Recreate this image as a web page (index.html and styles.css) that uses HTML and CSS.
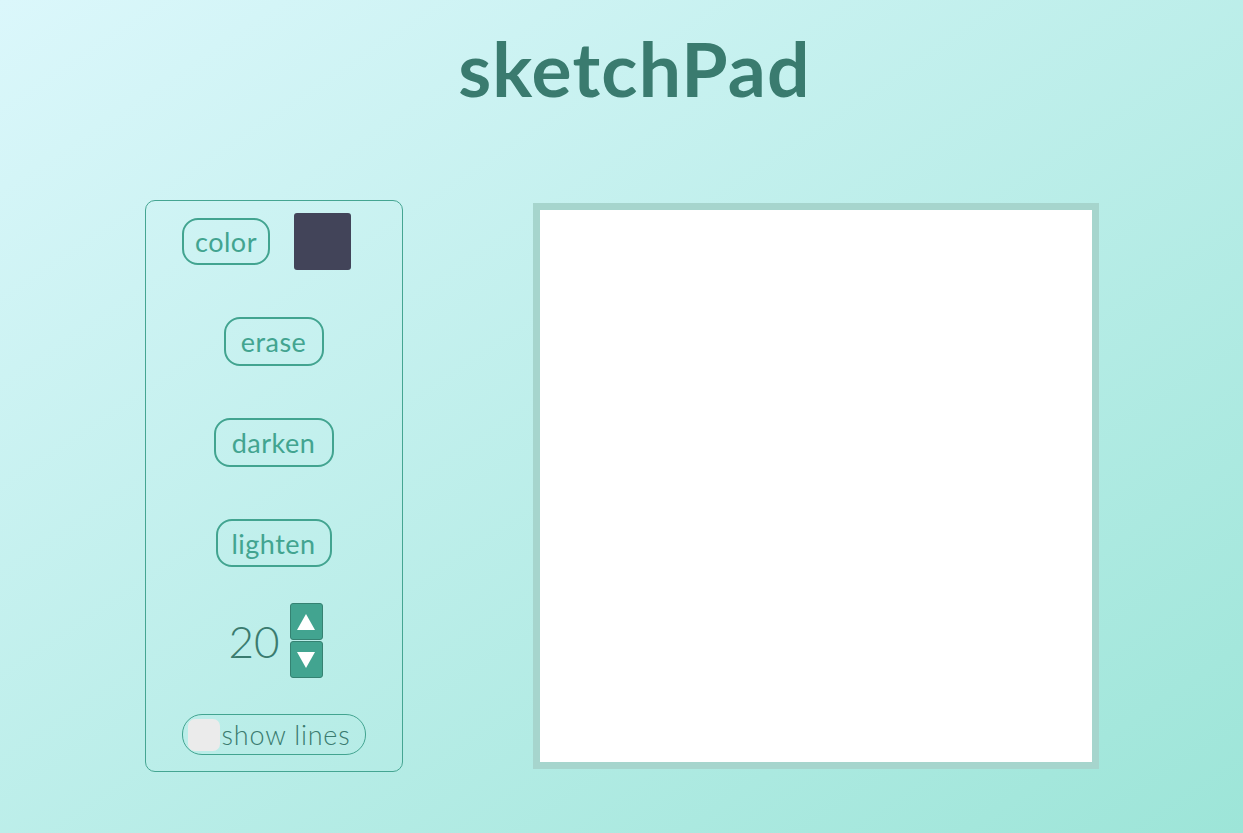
FILE: index.html
```html
<!DOCTYPE html>
<html lang="en">
<head>
<meta charset="utf-8">
<title>sketchPad</title>
<link rel="stylesheet" href="styles.css">
</head>
<body>
<h1 class="title">sketchPad</h1>
<main class="workspace">
  <section class="panel">
    <div class="row color-row">
      <button class="pill color-btn">color</button>
      <div class="swatch"></div>
    </div>
    <div class="row erase-row"><button class="pill erase-btn">erase</button></div>
    <div class="row darken-row"><button class="pill darken-btn">darken</button></div>
    <div class="row lighten-row"><button class="pill lighten-btn">lighten</button></div>
    <div class="row counter-row">
      <span class="count">20</span>
      <div class="steppers">
        <button class="step"><svg width="20" height="18" viewBox="0 0 20 18"><polygon points="10,1 19,17 1,17" fill="#fff"/></svg></button>
        <button class="step"><svg width="20" height="18" viewBox="0 0 20 18"><polygon points="1,1 19,1 10,17" fill="#fff"/></svg></button>
      </div>
    </div>
    <div class="row lines-row">
      <label class="lines"><span class="box"></span><span class="lines-text">show lines</span></label>
    </div>
  </section>
  <div class="canvas"></div>
</main>
</body>
</html>
```
FILE: styles.css
```css
html, body { margin: 0; padding: 0; }
body {
  width: 1243px;
  height: 833px;
  overflow: hidden;
  background: linear-gradient(to bottom right, #dbf7fb, #9de5d8);
  font-family: Lato, "Noto Sans", sans-serif;
  display: flex;
  flex-direction: column;
  align-items: center;
}
.title {
  margin: 22px 0 0 26px;
  font-size: 75px;
  line-height: 92px;
  font-weight: 700;
  color: #3a7b6f;
  letter-spacing: 1.2px;
}
.workspace {
  display: flex;
  align-items: center;
  gap: 130px;
  margin-top: 86px;
}
.panel {
  width: 256px;
  border: 1px solid #45a592;
  border-radius: 10px;
  padding: 12px 0 16px;
  display: flex;
  flex-direction: column;
  align-items: center;
}
.row { display: flex; align-items: center; justify-content: center; width: 100%; }
.color-row { gap: 24px; padding-right: 14px; box-sizing: border-box; }
.erase-row { margin-top: 47px; }
.darken-row, .lighten-row { margin-top: 52px; }
.counter-row { margin-top: 36px; gap: 10px; padding-left: 4px; box-sizing: border-box; }
.lines-row { margin-top: 36px; }
.pill {
  font-family: inherit;
  font-size: 27px;
  color: #42a490;
  background: transparent;
  border: 2px solid #42a490;
  border-radius: 16px;
  box-sizing: border-box;
  padding: 0;
  cursor: pointer;
  letter-spacing: 0.5px;
}
.color-btn { width: 88px; height: 47px; }
.erase-btn { width: 100px; height: 49px; }
.darken-btn { width: 120px; height: 49px; }
.lighten-btn { width: 116px; height: 48px; }
.swatch {
  width: 57px;
  height: 57px;
  background: #424459;
  border-radius: 3px;
}
.count {
  font-size: 44px;
  font-weight: 300;
  color: #3a7b6f;
}
.steppers { display: flex; flex-direction: column; gap: 1px; }
.step {
  width: 33px;
  height: 37px;
  padding: 0;
  background: #42a490;
  border: 1px solid #358272;
  border-radius: 3px;
  display: flex;
  align-items: center;
  justify-content: center;
}
.lines {
  display: flex;
  align-items: center;
  height: 41px;
  box-sizing: border-box;
  width: 184px;
  border: 1px solid #42a490;
  border-radius: 20px;
  padding-left: 5px;
  font-size: 27px;
  font-weight: 300;
  color: #3a7b6f;
}
.lines-text { letter-spacing: 0.8px; }
.box {
  width: 32px;
  height: 32px;
  background: #ebebeb;
  border-radius: 7px;
  margin-right: 2px;
}
.canvas {
  width: 552px;
  height: 552px;
  background: #fff;
  border: 7px solid #a6d5cd;
}
```
